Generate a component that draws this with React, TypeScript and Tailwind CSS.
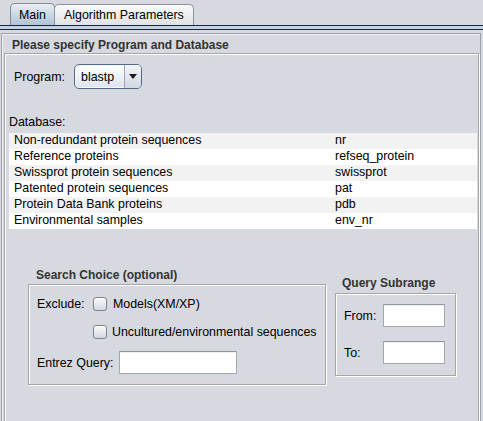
const databases: [string, string][] = [
  ['Non-redundant protein sequences', 'nr'],
  ['Reference proteins', 'refseq_protein'],
  ['Swissprot protein sequences', 'swissprot'],
  ['Patented protein sequences', 'pat'],
  ['Protein Data Bank proteins', 'pdb'],
  ['Environmental samples', 'env_nr'],
];

function CheckBox() {
  return (
    <span className="block h-[14px] w-[14px] shrink-0 rounded-[3px] border border-[#7d838c] bg-gradient-to-b from-[#fbfbfc] to-[#d3d7de] shadow-[inset_0_1px_0_#fff]" />
  );
}

function TextInput({ className }: { className: string }) {
  return (
    <span
      className={`block h-[23px] border border-[#a4a9b1] border-t-[#8f959e] bg-white shadow-[inset_0_1px_0_#eef0f3] ${className}`}
    />
  );
}

export default function App() {
  return (
    <div className="h-[421px] w-[483px] overflow-hidden bg-[#d6d9df] font-['Liberation_Sans',Arial,sans-serif] text-[12.4px] text-black">
      {/* tabs */}
      <div className="flex h-[25px] items-end pl-[10px]">
        <div className="flex h-[22px] w-[45px] items-center rounded-t-[5px] border border-b-0 border-[#838b97] bg-gradient-to-b from-[#e9eef4] to-[#b0c3d7] pl-[8px] leading-[12px]">
          Main
        </div>
        <div className="-ml-px flex h-[21px] w-[140px] items-center rounded-t-[5px] border border-b-0 border-[#8e949d] bg-gradient-to-b from-[#fafbfb] to-[#dfe2e6] pl-[9px] leading-[12px]">
          Algorithm Parameters
        </div>
      </div>
      <div className="h-[5px] border-y border-[#1b2737] bg-[#c3d3e5]" />

      {/* outer panel */}
      <div className="ml-[1px] mt-[3px] h-[400px] w-[480px] border border-[#9ca1a9] shadow-[inset_1px_1px_0_#eceef1]">
        <div className="h-[19px] pl-[10px] pt-[5px] text-[12px] font-bold leading-[12px] text-[#333]">
          Please specify Program and Database
        </div>

        {/* titled box */}
        <div className="ml-[2px] mr-[1px] h-[380px] border border-[#a6a6a6] shadow-[inset_1px_1px_0_#fff,1px_1px_0_#fff]">
          <div className="mt-[10px] flex h-[25px] items-center pl-[9px]">
            <span className="w-[60px] leading-[12px]">Program:</span>
            <div className="flex h-[25px] w-[68px] overflow-hidden rounded-[5px] border border-[#52698a] bg-gradient-to-b from-[#ffffff] to-[#dfe4eb] shadow-[inset_0_0_0_1px_#f4f7fb]">
              <span className="flex flex-1 items-center pl-[6px] leading-[12px]">blastp</span>
              <span className="flex w-[17px] items-center justify-center border-l border-[#9aa6b6] bg-gradient-to-b from-[#f3f5f8] to-[#d3d9e2]">
                <svg width="8" height="5" viewBox="0 0 8 5">
                  <path d="M0 0H8L4 5Z" fill="#1a1a1a" />
                </svg>
              </span>
            </div>
          </div>

          <div className="ml-[4px] mt-[27px] h-[12px] leading-[12px]">Database:</div>

          <div className="ml-[4px] mr-[1px] mt-[5px]">
            {databases.map(([name, id], i) => (
              <div
                key={id}
                className={`flex h-[16px] leading-[12px] ${i % 2 === 0 ? 'bg-[#f2f2f2]' : 'bg-white'}`}
              >
                <span className="w-[326px] pl-[5px] pt-[1px]">{name}</span>
                <span className="pt-[1px]">{id}</span>
              </div>
            ))}
          </div>

          <div className="mt-[40px] flex items-start">
            {/* search choice */}
            <div className="ml-[23px]">
              <div className="h-[12px] pl-[8px] text-[12px] font-bold leading-[12px] text-[#333]">Search Choice (optional)</div>
              <div className="mt-[3px] h-[101px] w-[298px] border border-[#a6a6a6] shadow-[inset_1px_1px_0_#fff,1px_1px_0_#fff]">
                <div className="mt-[12px] flex h-[14px] items-center pl-[8px]">
                  <span className="w-[56px] leading-[12px]">Exclude:</span>
                  <CheckBox />
                  <span className="ml-[6px] leading-[12px]">Models(XM/XP)</span>
                </div>
                <div className="mt-[14px] flex h-[14px] items-center pl-[64px]">
                  <CheckBox />
                  <span className="ml-[5px] leading-[12px]">Uncultured/environmental sequences</span>
                </div>
                <div className="mt-[12px] flex h-[23px] items-center pl-[8px]">
                  <span className="w-[82px] leading-[12px]">Entrez Query:</span>
                  <TextInput className="w-[118px]" />
                </div>
              </div>
            </div>

            {/* query subrange */}
            <div className="ml-[9px] mt-[8px]">
              <div className="h-[12px] pl-[7px] text-[12px] font-bold leading-[12px] text-[#333]">Query Subrange</div>
              <div className="mt-[4px] h-[83px] w-[121px] border border-[#a6a6a6] shadow-[inset_1px_1px_0_#fff,1px_1px_0_#fff]">
                <div className="mt-[10px] flex h-[23px] items-center pl-[8px]">
                  <span className="w-[39px] leading-[12px]">From:</span>
                  <TextInput className="w-[62px]" />
                </div>
                <div className="mt-[14px] flex h-[23px] items-center pl-[8px]">
                  <span className="w-[39px] leading-[12px]">To:</span>
                  <TextInput className="w-[62px]" />
                </div>
              </div>
            </div>
          </div>
        </div>
      </div>
    </div>
  );
}
